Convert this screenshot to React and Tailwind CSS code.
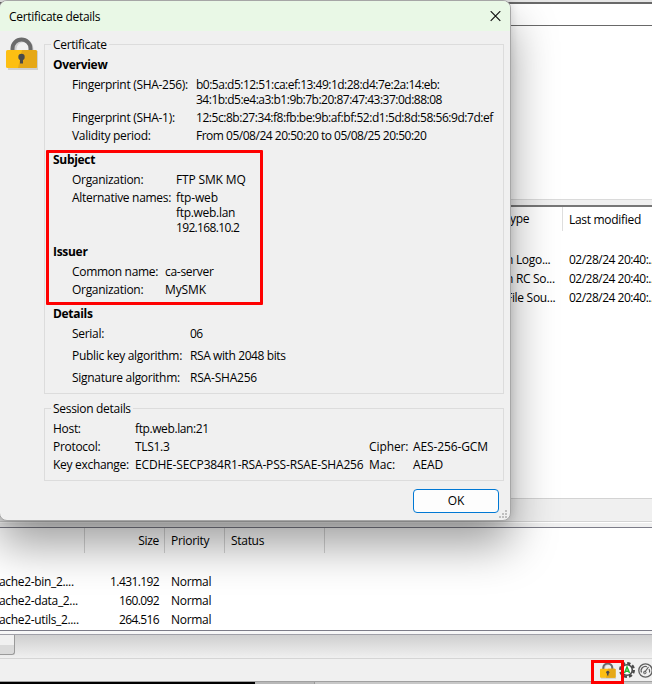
import React from "react";

function Padlock({ className }) {
  return (
    <svg className={className} viewBox="0 0 32 33" fill="none">
      <path d="M2 14h30v19H2z" fill="#cfcfcf" />
      <path d="M8.500 14v-2.200a8.500 8.500 0 0 1 17 0V14" stroke="#d0d0d0" strokeWidth="4" />
      <path d="M6.500 14v-2.500a9 9 0 0 1 18 0V14" stroke="#6b6b6b" strokeWidth="4" />
      <rect x="0" y="13" width="31" height="18" rx="1.500" fill="#fdbf12" />
      <path d="M16 13h13.500a1.500 1.500 0 0 1 1.500 1.500v15a1.500 1.500 0 0 1-1.500 1.500H12z" fill="#e6a817" />
      <circle cx="15.500" cy="20" r="3.200" fill="#4a4a4a" />
      <path d="M14 21h3v5.500h-3z" fill="#4a4a4a" />
    </svg>
  );
}

function Row({ label, labelWidth, children, valueClass = "" }) {
  return (
    <div className="flex">
      <div className={"shrink-0 " + labelWidth}>{label}</div>
      <div className={valueClass}>{children}</div>
    </div>
  );
}

function Group({ title, className, children }) {
  return (
    <section className={"border border-[#dcdcdc] px-2 " + className}>
      <h2 className="-mt-[8px] -ml-[2px] w-fit bg-[#f0f0f0] px-[2px] leading-[15px]">{title}</h2>
      {children}
    </section>
  );
}

function Dialog() {
  return (
    <div className="absolute top-0 -left-px flex h-[521px] w-[512px] flex-col overflow-visible rounded-[8px] border border-[#a6a6a6] bg-[#f0f0f0] leading-[15px] shadow-[0_24px_46px_rgba(0,0,0,0.38),0_0_10px_rgba(0,0,0,0.14)]">
      <header className="flex h-[30px] shrink-0 items-center justify-between rounded-t-[7px] bg-[#e9f8e6] pr-[9px] pl-[9px]">
        <span>Certificate details</span>
        <svg className="h-[11px] w-[11px]" viewBox="0 0 11 11" stroke="#111" strokeWidth="1.200">
          <path d="M.7.2l9.600 9.600M10.300.2L.7 9.800" />
        </svg>
      </header>
      <div className="flex pt-[6px] pl-[6px]">
        <Padlock className="h-[33px] w-[32px] shrink-0" />
        <div className="ml-[6px] w-[460px] pt-[7px]">
          <Group title="Certificate" className="h-[350px]">
            <h3 className="mt-[5px] font-bold">Overview</h3>
            <div className="mt-[5px] flex flex-col gap-[3px] pl-[19px]">
              <Row label="Fingerprint (SHA-256):" labelWidth="w-[124px]" valueClass="tracking-[-0.500px]">
                b0:5a:d5:12:51:ca:ef:13:49:1d:28:d4:7e:2a:14:eb:
                <br />
                34:1b:d5:e4:a3:b1:9b:7b:20:87:47:43:37:0d:88:08
              </Row>
              <Row label="Fingerprint (SHA-1):" labelWidth="w-[124px]" valueClass="tracking-[-0.450px]">
                12:5c:8b:27:34:f8:fb:be:9b:af:bf:52:d1:5d:8d:58:56:9d:7d:ef
              </Row>
              <Row label="Validity period:" labelWidth="w-[124px]" valueClass="tracking-[-0.490px]">
                From 05/08/24 20:50:20 to 05/08/25 20:50:20
              </Row>
            </div>
            <h3 className="mt-[9px] font-bold">Subject</h3>
            <div className="mt-[5px] flex flex-col gap-[3px] pl-[19px]">
              <Row label="Organization:" labelWidth="w-[104px]" valueClass="tracking-[-0.150px]">FTP SMK MQ</Row>
              <Row label="Alternative names:" labelWidth="w-[104px]" valueClass="tracking-[-0.150px]">
                ftp-web
                <br />
                <span className="tracking-[-0.300px]">ftp.web.lan</span>
                <br />
                <span className="tracking-[-0.660px]">192.168.10.2</span>
              </Row>
            </div>
            <h3 className="mt-[9px] font-bold">Issuer</h3>
            <div className="mt-[5px] flex flex-col gap-[3px] pl-[19px]">
              <Row label="Common name:" labelWidth="w-[93px]">ca-server</Row>
              <Row label="Organization:" labelWidth="w-[93px]" valueClass="tracking-[-0.100px]">MySMK</Row>
            </div>
            <h3 className="mt-[9px] font-bold">Details</h3>
            <div className="mt-[5px] flex flex-col gap-[7px] pl-[19px]">
              <Row label="Serial:" labelWidth="w-[118px]" valueClass="tracking-[-0.500px]">06</Row>
              <Row label="Public key algorithm:" labelWidth="w-[118px]" valueClass="tracking-[-0.400px]">RSA with 2048 bits</Row>
              <Row label="Signature algorithm:" labelWidth="w-[118px]" valueClass="tracking-[-0.200px]">RSA-SHA256</Row>
            </div>
          </Group>
          <Group title="Session details" className="mt-[14px] h-[73px]">
            <div className="mt-[5px] flex flex-col gap-[3px] whitespace-nowrap">
              <Row label="Host:" labelWidth="w-[82px]" valueClass="tracking-[-0.400px]">ftp.web.lan:21</Row>
              <div className="flex">
                <span className="w-[82px]">Protocol:</span>
                <span className="w-[234px]">TLS1.3</span>
                <span className="w-[44px] tracking-[-0.100px]">Cipher:</span>
                <span className="tracking-[-0.120px]">AES-256-GCM</span>
              </div>
              <div className="flex">
                <span className="w-[82px]">Key exchange:</span>
                <span className="w-[234px] tracking-[-0.170px]">ECDHE-SECP384R1-RSA-PSS-RSAE-SHA256</span>
                <span className="w-[44px] tracking-[-0.100px]">Mac:</span>
                <span className="tracking-[-0.100px]">AEAD</span>
              </div>
            </div>
          </Group>
        </div>
      </div>
      <div className="mt-[8px] flex justify-end pr-[11px]">
        <button className="h-[24px] w-[86px] rounded-[4px] border border-[#0078d4] bg-[#fdfdfd] pb-[2px] tracking-[-0.200px]">OK</button>
      </div>
      <svg className="absolute right-[3px] bottom-[2px] h-[8px] w-[8px]" viewBox="0 0 8 8" fill="#bfbfbf">
        <path d="M6 0h2v2H6zM3 3h2v2H3zM6 3h2v2H6zM0 6h2v2H0zM3 6h2v2H3zM6 6h2v2H6z" />
      </svg>
    </div>
  );
}

const remoteFiles = [
  ["n Logo...", "02/28/24 20:40:..."],
  ["n RC So...", "02/28/24 20:40:..."],
  ["File Sou...", "02/28/24 20:40:..."],
];

const queue = [
  ["ache2-bin_2....", "1.431.192", "Normal"],
  ["ache2-data_2...", "160.092", "Normal"],
  ["ache2-utils_2....", "264.516", "Normal"],
];

export default function App() {
  return (
    <div className="relative h-[684px] w-[652px] overflow-hidden bg-[#f0f0f0] font-['Open_Sans','Noto_Sans',sans-serif] text-[12px] leading-[19px] tracking-[-0.300px] whitespace-nowrap text-black">
      <div className="flex h-full flex-col">
        <div className="h-[2px] shrink-0 bg-[#e6e6e6]" />
        <div className="h-[24px] shrink-0 border-t-2 border-b border-[#696969] bg-white" />
        <div className="h-[173px] shrink-0 bg-white" />
        <div className="h-[6px] shrink-0 border-t border-[#dadada]" />
        <div className="h-[293px] shrink-0 border-t-2 border-[#777] bg-white pl-[506px]">
          <div className="flex h-[24px] items-center">
            <span className="h-full w-[57px] border-r border-[#dedede] leading-[23px]">type</span>
            <span className="pl-[6px]">Last modified</span>
          </div>
          <div className="mt-[19px]">
            {remoteFiles.map(([type, date]) => (
              <div key={type} className="flex h-[19px]">
                <span className="w-[63px] shrink-0">{type}</span>
                <span className="tracking-[-0.500px]">{date}</span>
              </div>
            ))}
          </div>
        </div>
        <div className="h-[24px] shrink-0 border-t border-b border-[#d3d3d3]" />
        <div className="h-px shrink-0 bg-white" />
        <div className="h-[4px] shrink-0" />
        <div className="h-[104px] shrink-0 border-t border-b border-[#7c7c88] bg-white">
          <div className="flex h-[25px] leading-[26px]">
            <span className="w-[85px] border-r border-[#d6d6d6]" />
            <span className="w-[80px] border-r border-[#d6d6d6] pr-[5px] text-right">Size</span>
            <span className="w-[60px] border-r border-[#d6d6d6] pl-[6px]">Priority</span>
            <span className="w-[100px] border-r border-[#d6d6d6] pl-[6px]">Status</span>
          </div>
          <div className="mt-[19px]">
            {queue.map(([name, size, priority]) => (
              <div key={name} className="flex h-[19px]">
                <span className="-ml-px w-[86px] tracking-[-0.330px]">{name}</span>
                <span className="w-[74px] text-right tracking-[-0.600px]">{size}</span>
                <span className="pl-[12px]">{priority}</span>
              </div>
            ))}
          </div>
        </div>
        <div className="h-[3px] shrink-0 bg-[#f7f7f7]" />
        <div className="h-[25px] shrink-0 border-t border-b border-t-[#a0a0a8] border-b-[#d5d5d5] bg-linear-to-b from-[#cfcfcf] to-[#f0f0f0]">
          <div className="h-[20px] w-[15px] rounded-br-[3px] border-r border-b border-[#9a9a9a] bg-linear-to-b from-[#f0f0f0] from-50% to-[#dadada] to-50%" />
        </div>
        <footer className="flex h-[22px] shrink-0 items-center justify-end">
          <Padlock className="mr-[3px] h-[17px] w-[16px]" />
          <svg className="h-[16px] w-[16px]" viewBox="0 0 16 16">
            <circle cx="8" cy="8" r="6.800" fill="none" stroke="#4b4b4b" strokeWidth="2.400" strokeDasharray="3.300 2.040" />
            <circle cx="8" cy="8" r="5.300" fill="#fff" stroke="#4b4b4b" strokeWidth="1.600" />
            <path d="M5.500 11L8 5l2.500 6M6.500 9.200h3" fill="none" stroke="#27b53b" strokeWidth="1.500" />
          </svg>
          <svg className="-mr-[1px] ml-[3px] h-[15px] w-[15px]" viewBox="0 0 15 15" fill="none" stroke="#5f5f5f">
            <circle cx="7.500" cy="7.500" r="6.700" strokeWidth="1.300" />
            <path d="M3.500 9.500a4.300 4.300 0 0 1 5.500-5.800M11 6a4.300 4.300 0 0 1 .5 3.500M6.500 9.500L10.500 4" strokeWidth="1.200" />
            <circle cx="6.800" cy="9.500" r="1.300" strokeWidth="1" />
          </svg>
        </footer>
        <div className="flex h-[4px] shrink-0 border-t border-[#a0a0a0]">
          <div className="w-[255px] bg-black" />
          <div className="w-[60px] border-r border-[#999] bg-[#b8b8b8]" />
          <div className="flex-1 bg-[#c8c8c8]" />
        </div>
      </div>
      <Dialog />
      <div className="absolute top-[150px] left-[46px] h-[155px] w-[217px] rounded-[1px] border-[3px] border-[#fe0000]" />
      <div className="absolute top-[660px] left-[591px] h-[24px] w-[33px] border-[3px] border-[#fe0000]" />
    </div>
  );
}
